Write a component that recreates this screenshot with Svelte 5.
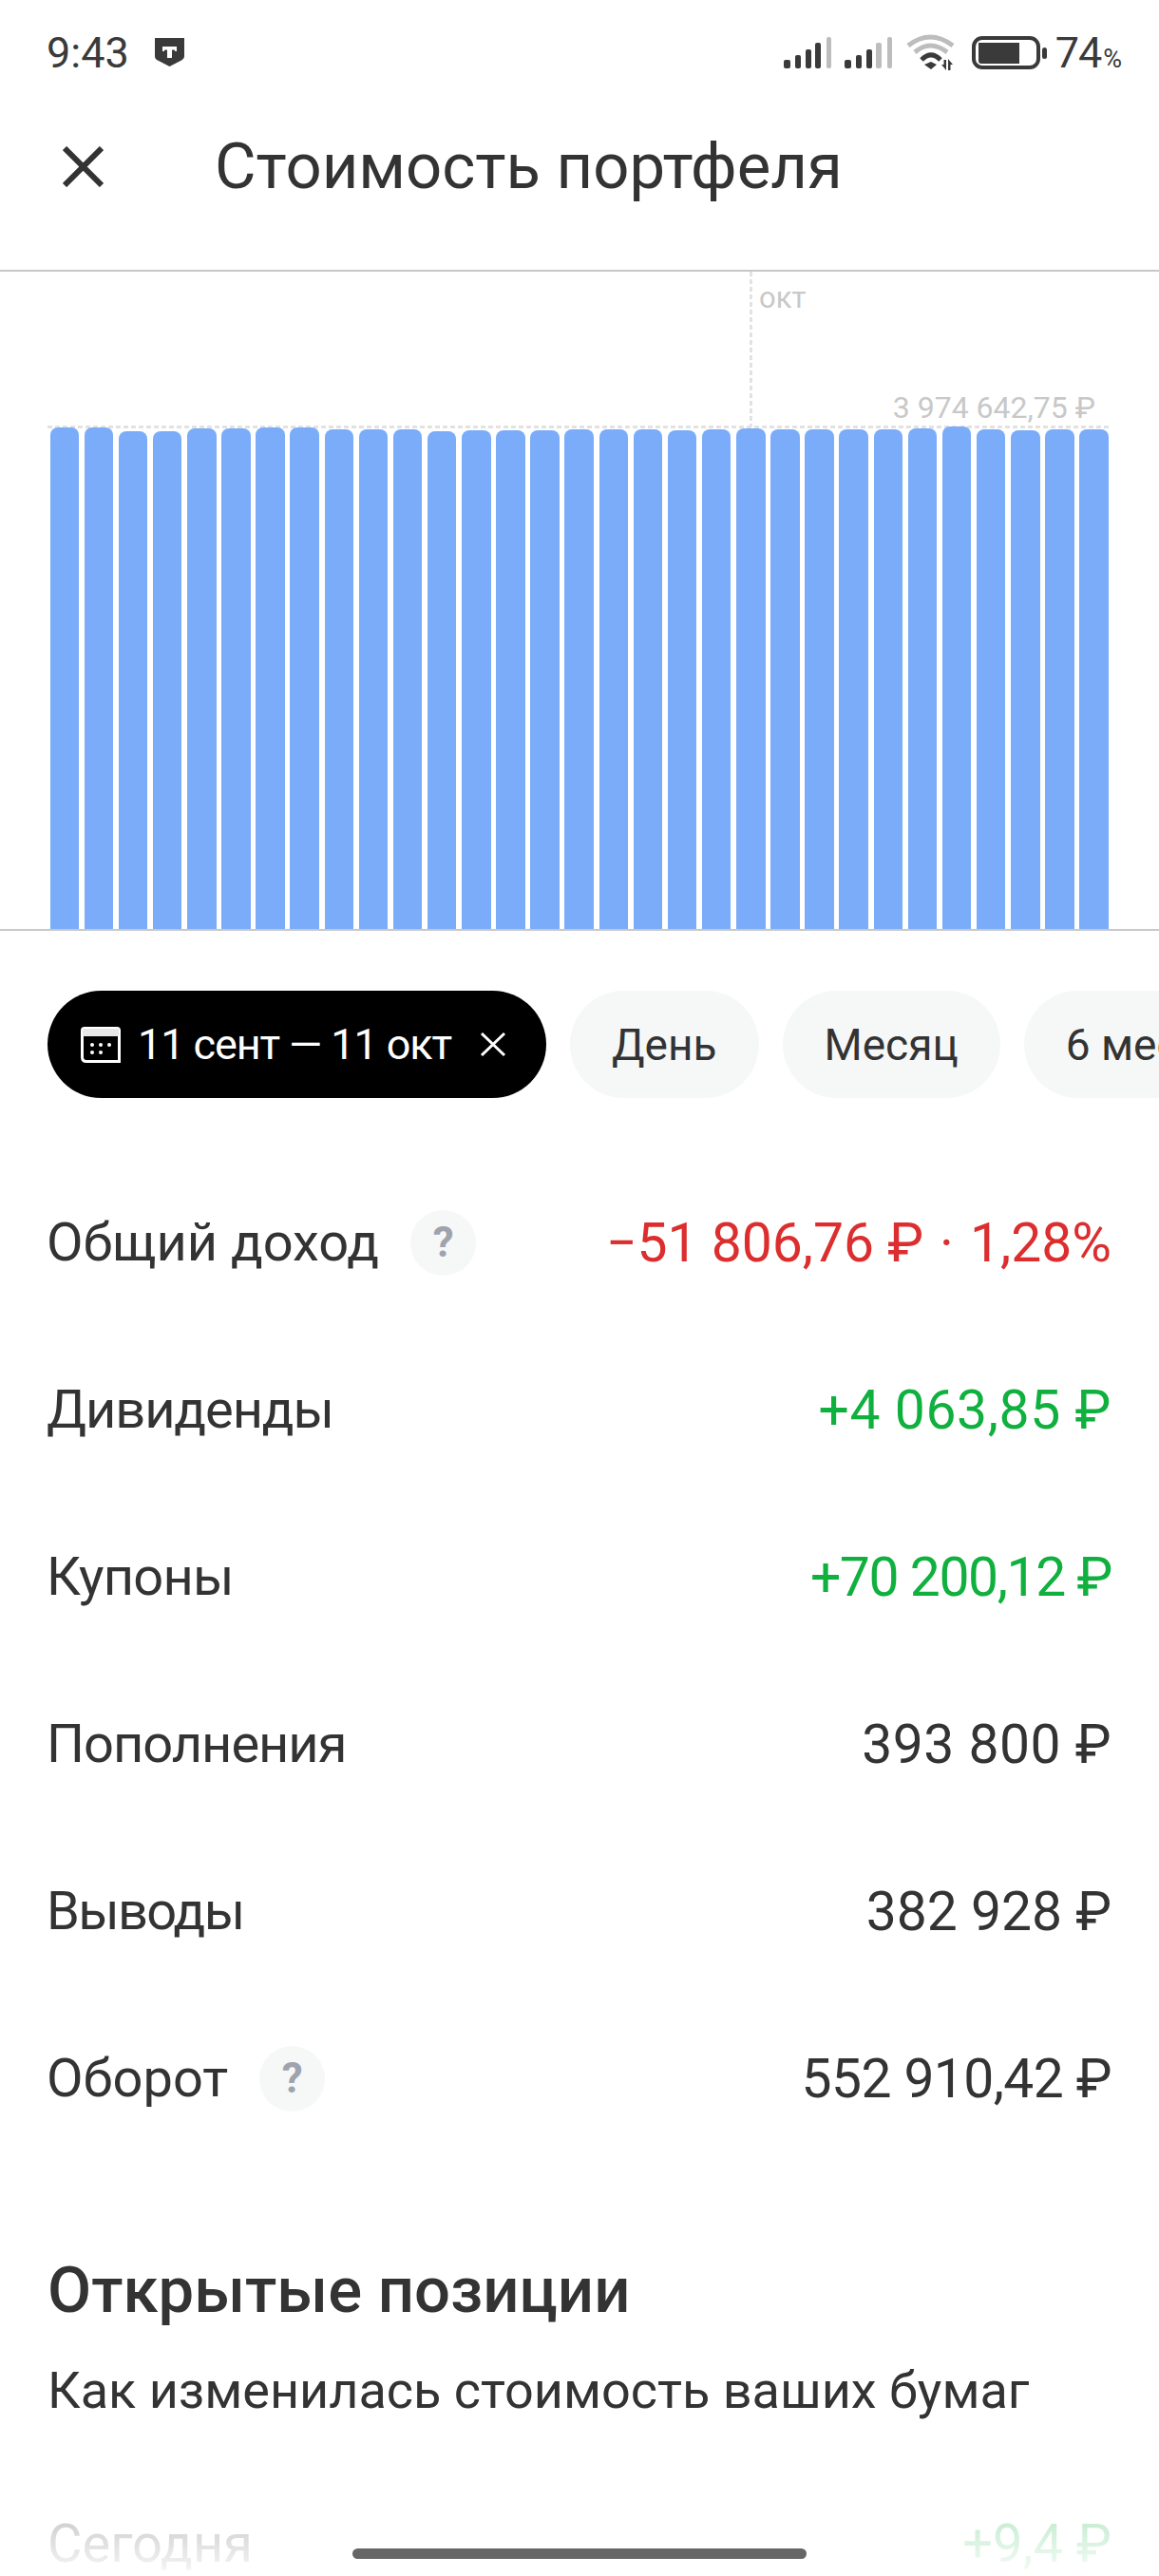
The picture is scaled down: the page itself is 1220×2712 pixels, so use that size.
<script>
  // top edge of each bar in page pixels
  const barTops = [450, 450, 454, 454, 451, 451, 450, 450, 452, 452, 452, 454, 453, 453, 453, 452, 452, 452, 453, 452, 451, 452, 452, 452, 452, 451, 449, 452, 453, 452, 452];
  const chartBottom = 978;

  const chips = ['День', 'Месяц', '6 месяцев'];

  const rows = [
    { label: 'Общий доход', value: '−51 806,76 ₽', tail: '1,28%', tone: 'loss', hint: true },
    { label: 'Дивиденды', value: '+4 063,85 ₽', tone: 'gain', labelTrack: -1.1, valueTrack: 0.6 },
    { label: 'Купоны', value: '+70 200,12 ₽', tone: 'gain', labelTrack: -0.8, valueTrack: -1.4 },
    { label: 'Пополнения', value: '393 800 ₽', labelTrack: -1, valueTrack: 0.5 },
    { label: 'Выводы', value: '382 928 ₽', labelTrack: -1.7 },
    { label: 'Оборот', value: '552 910,42 ₽', valueTrack: -0.6, hint: true },
  ];
</script>

<main class="screen">
  <header class="status">
    <div class="status-left">
      <span class="time">9:43</span>
      <svg width="31" height="30" viewBox="0 0 31 30">
        <path d="M0 0h31v19c0 2-1 3-3 4.500L15.500 30 3 23.500C1 22.500 0 21 0 19z" fill="#3a3a3a" />
        <path d="M8 9h15v5h-1.500l-1-1.500h-2.500V21h-5v-8.500h-2.500l-1 1.500H8z" fill="#fff" />
      </svg>
    </div>
    <div class="status-right">
      <svg class="signal" width="50" height="33" viewBox="0 0 50 33">
        <rect x="0" y="24" width="7" height="9" rx="2" fill="#3a3a3a" />
        <rect x="12" y="19" width="6" height="14" rx="2" fill="#3a3a3a" />
        <rect x="23" y="13" width="6" height="20" rx="2" fill="#3a3a3a" />
        <rect x="33" y="6" width="6" height="27" rx="2" fill="#3a3a3a" />
        <rect x="45" y="0" width="5" height="33" rx="2" fill="#bdbdbd" />
      </svg>
      <svg class="signal" width="50" height="33" viewBox="0 0 50 33">
        <rect x="0" y="24" width="7" height="9" rx="2" fill="#3a3a3a" />
        <rect x="12" y="19" width="6" height="14" rx="2" fill="#3a3a3a" />
        <rect x="23" y="13" width="6" height="20" rx="2" fill="#3a3a3a" />
        <rect x="33" y="6" width="6" height="27" rx="2" fill="#bdbdbd" />
        <rect x="45" y="0" width="5" height="33" rx="2" fill="#bdbdbd" />
      </svg>
      <svg class="wifi" width="53" height="38" viewBox="0 0 53 38">
        <path d="M2 12Q25-6 49 12" fill="none" stroke="#bdbdbd" stroke-width="5" />
        <path d="M9 19Q25 5 43 19" fill="none" stroke="#bdbdbd" stroke-width="5" />
        <path d="M16 27Q26 17 36 27" fill="none" stroke="#3a3a3a" stroke-width="5" />
        <path d="M19 32l7-3 6 3-6 5z" fill="#3a3a3a" />
        <path d="M42 27v11l-5-6h2.500v-5zM44 38V26l5 6h-2.500v6z" fill="#3a3a3a" />
      </svg>
      <svg class="battery-icon" width="79" height="35" viewBox="0 0 79 35">
        <rect x="2" y="2" width="68" height="31" rx="9" fill="none" stroke="#3a3a3a" stroke-width="4" />
        <path d="M7 7h43v22H10q-3 0-3-3z" fill="#3a3a3a" />
        <rect x="74" y="12" width="5" height="12" rx="2.500" fill="#3a3a3a" />
      </svg>
      <span class="battery">74<small>%</small></span>
    </div>
  </header>

  <nav class="nav">
    <button class="close" aria-label="Закрыть">
      <svg width="43" height="43" viewBox="0 0 43 43">
        <path d="M2 2l39 39M41 2L2 41" fill="none" stroke="#333" stroke-width="6" />
      </svg>
    </button>
    <h1>Стоимость портфеля</h1>
  </nav>

  <section class="chart">
    <span class="guide-v"></span>
    <span class="guide-h"></span>
    <span class="month">окт</span>
    <span class="peak">3 974 642,75 ₽</span>
    <div class="bars">
      {#each barTops as top}
        <div class="bar" style="height: {chartBottom - top}px"></div>
      {/each}
    </div>
  </section>

  <div class="chips">
    <div class="chip active">
      <svg width="42" height="38" viewBox="0 0 42 38">
        <path d="M4 1.500h34q2.500 0 2.500 2.500v32.500H6q-4.500 0-4.500-4.500V4q0-2.500 2.500-2.500z" fill="none" stroke="#fff" stroke-width="3" />
        <path d="M2 2h38v8H2z" fill="#e8e8e8" />
        <circle cx="12" cy="19" r="2" fill="#fff" /><circle cx="21" cy="19" r="2" fill="#fff" /><circle cx="30" cy="19" r="2" fill="#fff" />
        <circle cx="12" cy="27" r="2" fill="#fff" /><circle cx="21" cy="27" r="2" fill="#fff" />
      </svg>
      <span class="range">11 сент — 11 окт</span>
      <svg width="28" height="27" viewBox="0 0 28 27">
        <path d="M2 2l24 23M26 2L2 25" fill="none" stroke="#fff" stroke-width="3" />
      </svg>
    </div>
    {#each chips as chip}
      <div class="chip">{chip}</div>
    {/each}
  </div>

  <dl class="stats">
    {#each rows as row}
      <div class="row">
        <dt>
          <span style="letter-spacing: {row.labelTrack ?? 0}px">{row.label}</span>
          {#if row.hint}
            <span class="hint">?</span>
          {/if}
        </dt>
        <dd class={row.tone} style="letter-spacing: {row.valueTrack ?? 0}px">
          {row.value}{#if row.tail}<span class="dot">·</span>{row.tail}{/if}
        </dd>
      </div>
    {/each}
  </dl>

  <h2>Открытые позиции</h2>
  <p class="sub">Как изменилась стоимость ваших бумаг</p>

  <div class="row today">
    <span>Сегодня</span>
    <span class="gain">+9,4 ₽</span>
  </div>

  <div class="fade"></div>
  <div class="home"></div>
</main>

<style>
  :global(body) {
    margin: 0;
    background: #fff;
  }

  .screen {
    position: relative;
    width: 1220px;
    height: 2712px;
    overflow: hidden;
    font-family: Roboto, "Noto Sans", sans-serif;
    color: #333;
  }

  .status {
    height: 110px;
    padding: 0 40px 0 49px;
    display: flex;
    justify-content: space-between;
    align-items: center;
    box-sizing: border-box;
  }

  .status-left,
  .status-right {
    display: flex;
    align-items: center;
  }

  .status-left {
    gap: 27px;
  }

  .status-right {
    gap: 14px;
  }

  .wifi {
    margin-left: 1px;
    margin-right: 2px;
  }

  .time,
  .battery {
    font-size: 45px;
    color: #3a3a3a;
  }

  .battery {
    margin-left: -5px;
    letter-spacing: -1px;
  }

  .battery small {
    font-size: 27px;
    margin-left: 2px;
  }

  .nav {
    height: 174px;
    padding: 0 0 44px 66px;
    display: flex;
    align-items: center;
    box-sizing: border-box;
  }

  .close {
    width: 43px;
    padding: 0;
    border: 0;
    background: none;
    display: flex;
    margin-right: 117px;
  }

  h1 {
    margin: 0;
    font-size: 67px;
    font-weight: 400;
  }

  .chart {
    position: relative;
    height: 696px;
    border-top: 2px solid #c8c8c8;
    border-bottom: 2px solid #c8c8c8;
    box-sizing: border-box;
  }

  .bars {
    position: absolute;
    left: 52.500px;
    bottom: 0;
    display: flex;
    align-items: flex-end;
    gap: 5.630px;
  }

  .bar {
    width: 30.500px;
    background: #7aacf9;
    border-radius: 8px 8px 0 0;
  }

  .guide-v {
    position: absolute;
    left: 789px;
    top: 0;
    width: 3px;
    height: 163px;
    background: repeating-linear-gradient(#e2e2e2 0 5px, transparent 5px 8px);
  }

  .guide-h {
    position: absolute;
    left: 50px;
    right: 50px;
    top: 162px;
    height: 3px;
    background: repeating-linear-gradient(90deg, #e2e2e2 0 5px, transparent 5px 8px);
  }

  .month {
    position: absolute;
    left: 799px;
    top: 9px;
    font-size: 31px;
    color: #c8c8c8;
  }

  .peak {
    position: absolute;
    right: 67px;
    top: 124px;
    font-size: 32px;
    color: #c8c8c8;
  }

  .chips {
    display: flex;
    gap: 25px;
    padding: 63px 0 0 50px;
    white-space: nowrap;
  }

  .chip {
    height: 113px;
    padding: 0 44px;
    border-radius: 57px;
    background: #f6f7f7;
    display: flex;
    align-items: center;
    flex: none;
    font-size: 46px;
  }

  .chip.active {
    width: 525px;
    padding: 0 0 0 35px;
    background: #000;
    color: #fff;
    box-sizing: border-box;
  }

  .range {
    width: 329px;
    margin: 0 31px 0 18px;
    font-size: 45px;
    letter-spacing: -1.100px;
  }

  .stats {
    margin: 64px 0 0;
    padding: 0 50px;
  }

  .row {
    height: 176px;
    display: flex;
    justify-content: space-between;
    align-items: center;
    font-size: 56px;
  }

  dt {
    display: flex;
    align-items: center;
    gap: 33px;
    margin-left: -1px;
  }

  dd {
    margin: 0;
    font-size: 57px;
    white-space: nowrap;
  }

  .dot {
    margin: 0 17px;
  }

  .loss {
    color: #dc2e2e;
  }

  .gain {
    color: #10b03f;
  }

  .hint {
    width: 69px;
    height: 69px;
    border-radius: 50%;
    background: #f6f7f7;
    color: #9fa3ad;
    font-size: 44px;
    font-weight: 700;
    display: flex;
    align-items: center;
    justify-content: center;
  }

  h2 {
    margin: 95px 0 0 50px;
    font-size: 67px;
    line-height: 80px;
    font-weight: 500;
  }

  .sub {
    margin: 31px 0 0 50px;
    font-size: 54px;
    line-height: 70px;
  }

  .today {
    padding: 0 50px;
    margin-top: 86px;
    height: 80px;
  }

  .fade {
    position: absolute;
    left: 0;
    right: 0;
    bottom: 0;
    height: 72px;
    background: linear-gradient(rgba(255, 255, 255, 0.72), rgba(255, 255, 255, 0.97));
  }

  .home {
    position: absolute;
    left: 371px;
    top: 2683px;
    width: 478px;
    height: 11px;
    border-radius: 6px;
    background: #666;
  }
</style>
